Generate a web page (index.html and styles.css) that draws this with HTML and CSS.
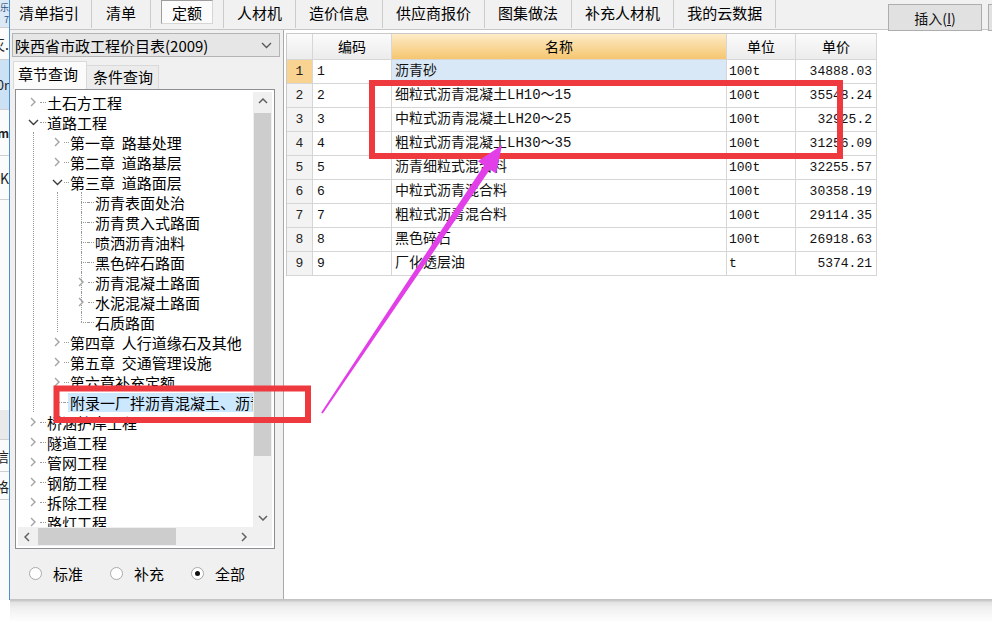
FILE: index.html
```html
<!DOCTYPE html>
<html lang="zh">
<head>
<meta charset="utf-8">
<title>定额</title>
<link rel="stylesheet" href="styles.css">
</head>
<body>
<div class="screen">
  <div class="strip">
    <div class="sb sb1"><span>乐</span><span>7</span></div>
    <div class="sb sb2"><span>灭.</span></div>
    <div class="sb sb3"><span>0r</span></div>
    <div class="sb sb4"><span>m</span></div>
    <div class="sb sb5"><span>K</span></div>
    <div class="sb sb6"></div>
    <div class="sb sb7"></div>
    <div class="sb sb8"><span>信</span></div>
    <div class="sb sb9"><span>格</span></div>
    <div class="sb sb10"></div>
  </div>
  <div class="window">
    <div class="tabbar">
      <div class="tab first">清单指引</div>
      <div class="tab wide">清单</div>
      <div class="tab sel"><span class="selbox">定额</span></div>
      <div class="tab">人材机</div>
      <div class="tab">造价信息</div>
      <div class="tab">供应商报价</div>
      <div class="tab">图集做法</div>
      <div class="tab">补充人材机</div>
      <div class="tab">我的云数据</div>
      <button class="btn">插入(<u>I</u>)</button>
      <button class="btn2"></button>
    </div>
    <div class="main">
      <div class="left">
        <div class="combo">
          <span>陕西省市政工程价目表(2009)</span>
          <svg class="combo-arrow" width="11" height="7" viewBox="0 0 11 7"><path d="M1 1l4.5 4.5L10 1" fill="none" stroke="#555" stroke-width="1.3"/></svg>
        </div>
        <div class="ltabs">
          <div class="ltab active">章节查询</div>
          <div class="ltab">条件查询</div>
        </div>
        <div class="tree">
          <div class="tree-body">
            <div class="node l0"><i class="tw"><svg width="8" height="10" viewBox="0 0 8 10"><path d="M2 1l4 4-4 4" fill="none" stroke="#a3a3a3" stroke-width="1.4"/></svg></i><i class="stub"></i><span>土石方工程</span></div>
            <div class="node l0"><i class="tw"><svg width="11" height="7" viewBox="0 0 11 7"><path d="M1 1l4.5 4.5L10 1" fill="none" stroke="#3c3c3c" stroke-width="1.4"/></svg></i><i class="stub"></i><span>道路工程</span></div>
            <div class="kids ka">
              <div class="node l1"><i class="tw"><svg width="8" height="10" viewBox="0 0 8 10"><path d="M2 1l4 4-4 4" fill="none" stroke="#a3a3a3" stroke-width="1.4"/></svg></i><i class="stub"></i><span>第一章&nbsp;&nbsp;路基处理</span></div>
              <div class="node l1"><i class="tw"><svg width="8" height="10" viewBox="0 0 8 10"><path d="M2 1l4 4-4 4" fill="none" stroke="#a3a3a3" stroke-width="1.4"/></svg></i><i class="stub"></i><span>第二章&nbsp;&nbsp;道路基层</span></div>
              <div class="node l1"><i class="tw"><svg width="11" height="7" viewBox="0 0 11 7"><path d="M1 1l4.5 4.5L10 1" fill="none" stroke="#3c3c3c" stroke-width="1.4"/></svg></i><i class="stub"></i><span>第三章&nbsp;&nbsp;道路面层</span></div>
              <div class="kids kb">
                <div class="node l2 leaf"><i class="tw"></i><i class="stub"></i><span>沥青表面处治</span></div>
                <div class="node l2 leaf"><i class="tw"></i><i class="stub"></i><span>沥青贯入式路面</span></div>
                <div class="node l2 leaf"><i class="tw"></i><i class="stub"></i><span>喷洒沥青油料</span></div>
                <div class="node l2 leaf"><i class="tw"></i><i class="stub"></i><span>黑色碎石路面</span></div>
                <div class="node l2 mid"><i class="tw"><svg width="8" height="10" viewBox="0 0 8 10"><path d="M2 1l4 4-4 4" fill="none" stroke="#a3a3a3" stroke-width="1.4"/></svg></i><i class="stub"></i><span>沥青混凝土路面</span></div>
                <div class="node l2 mid"><i class="tw"><svg width="8" height="10" viewBox="0 0 8 10"><path d="M2 1l4 4-4 4" fill="none" stroke="#a3a3a3" stroke-width="1.4"/></svg></i><i class="stub"></i><span>水泥混凝土路面</span></div>
                <div class="node l2 leaf last"><i class="tw"></i><i class="stub"></i><span>石质路面</span></div>
              </div>
              <div class="node l1"><i class="tw"><svg width="8" height="10" viewBox="0 0 8 10"><path d="M2 1l4 4-4 4" fill="none" stroke="#a3a3a3" stroke-width="1.4"/></svg></i><i class="stub"></i><span>第四章&nbsp;&nbsp;人行道缘石及其他</span></div>
              <div class="node l1"><i class="tw"><svg width="8" height="10" viewBox="0 0 8 10"><path d="M2 1l4 4-4 4" fill="none" stroke="#a3a3a3" stroke-width="1.4"/></svg></i><i class="stub"></i><span>第五章&nbsp;&nbsp;交通管理设施</span></div>
              <div class="node l1"><i class="tw"><svg width="8" height="10" viewBox="0 0 8 10"><path d="M2 1l4 4-4 4" fill="none" stroke="#a3a3a3" stroke-width="1.4"/></svg></i><i class="stub"></i><span>第六章补充定额</span></div>
              <div class="node l1 leaf1"><i class="tw"></i><i class="stub short"></i><span class="hl">附录一厂拌沥青混凝土、沥青混合料</span></div>
            </div>
            <div class="node l0"><i class="tw"><svg width="8" height="10" viewBox="0 0 8 10"><path d="M2 1l4 4-4 4" fill="none" stroke="#a3a3a3" stroke-width="1.4"/></svg></i><i class="stub"></i><span>桥涵护岸工程</span></div>
            <div class="node l0"><i class="tw"><svg width="8" height="10" viewBox="0 0 8 10"><path d="M2 1l4 4-4 4" fill="none" stroke="#a3a3a3" stroke-width="1.4"/></svg></i><i class="stub"></i><span>隧道工程</span></div>
            <div class="node l0"><i class="tw"><svg width="8" height="10" viewBox="0 0 8 10"><path d="M2 1l4 4-4 4" fill="none" stroke="#a3a3a3" stroke-width="1.4"/></svg></i><i class="stub"></i><span>管网工程</span></div>
            <div class="node l0"><i class="tw"><svg width="8" height="10" viewBox="0 0 8 10"><path d="M2 1l4 4-4 4" fill="none" stroke="#a3a3a3" stroke-width="1.4"/></svg></i><i class="stub"></i><span>钢筋工程</span></div>
            <div class="node l0"><i class="tw"><svg width="8" height="10" viewBox="0 0 8 10"><path d="M2 1l4 4-4 4" fill="none" stroke="#a3a3a3" stroke-width="1.4"/></svg></i><i class="stub"></i><span>拆除工程</span></div>
            <div class="node l0"><i class="tw"><svg width="8" height="10" viewBox="0 0 8 10"><path d="M2 1l4 4-4 4" fill="none" stroke="#a3a3a3" stroke-width="1.4"/></svg></i><i class="stub"></i><span>路灯工程</span></div>
          </div>
          <div class="vscroll">
            <div class="sarrow"><svg width="10" height="6" viewBox="0 0 10 6"><path d="M1 5l4-4 4 4" fill="none" stroke="#606060" stroke-width="1.5"/></svg></div>
            <div class="vtrack"><div class="vthumb"></div></div>
            <div class="sarrow"><svg width="10" height="6" viewBox="0 0 10 6"><path d="M1 1l4 4 4-4" fill="none" stroke="#606060" stroke-width="1.5"/></svg></div>
          </div>
          <div class="hscroll">
            <div class="harrow"><svg width="6" height="10" viewBox="0 0 6 10"><path d="M5 1L1 5l4 4" fill="none" stroke="#606060" stroke-width="1.5"/></svg></div>
            <div class="htrack"><div class="hthumb"></div></div>
            <div class="harrow"><svg width="6" height="10" viewBox="0 0 6 10"><path d="M1 1l4 4-4 4" fill="none" stroke="#606060" stroke-width="1.5"/></svg></div>
          </div>
          <div class="corner"></div>
        </div>
        <div class="radios">
          <label class="radio"><i class="circle"></i>标准</label>
          <label class="radio"><i class="circle"></i>补充</label>
          <label class="radio"><i class="circle on"></i>全部</label>
        </div>
      </div>
      <div class="right">
        <div class="grid">
          <div class="hd"></div>
          <div class="hd">编码</div>
          <div class="hd hd-sel">名称</div>
          <div class="hd">单位</div>
          <div class="hd">单价</div>

          <div class="rn rn-sel">1</div><div class="c code">1</div><div class="c name name-sel">沥青砂</div><div class="c unit">100t</div><div class="c price">34888.03</div>
          <div class="rn">2</div><div class="c code">2</div><div class="c name">细粒式沥青混凝土LH10～15</div><div class="c unit">100t</div><div class="c price">35548.24</div>
          <div class="rn">3</div><div class="c code">3</div><div class="c name">中粒式沥青混凝土LH20～25</div><div class="c unit">100t</div><div class="c price">32925.2</div>
          <div class="rn">4</div><div class="c code">4</div><div class="c name">粗粒式沥青混凝土LH30～35</div><div class="c unit">100t</div><div class="c price">31256.09</div>
          <div class="rn">5</div><div class="c code">5</div><div class="c name">沥青细粒式混合料</div><div class="c unit">100t</div><div class="c price">32255.57</div>
          <div class="rn">6</div><div class="c code">6</div><div class="c name">中粒式沥青混合料</div><div class="c unit">100t</div><div class="c price">30358.19</div>
          <div class="rn">7</div><div class="c code">7</div><div class="c name">粗粒式沥青混合料</div><div class="c unit">100t</div><div class="c price">29114.35</div>
          <div class="rn">8</div><div class="c code">8</div><div class="c name">黑色碎石</div><div class="c unit">100t</div><div class="c price">26918.63</div>
          <div class="rn">9</div><div class="c code">9</div><div class="c name">厂化透层油</div><div class="c unit">t</div><div class="c price">5374.21</div>
        </div>
      </div>
    </div>
  </div>
</div>
<div class="shadow"></div>

<svg class="overlay" width="992" height="621" viewBox="0 0 992 621">
  <rect x="372" y="83" width="468" height="73" fill="none" stroke="#ee3a3f" stroke-width="6"/>
  <rect x="56.5" y="388.5" width="251.5" height="31.5" fill="none" stroke="#ee3a3f" stroke-width="6"/>
  <polygon points="321.2,412.4 484.0,165.5 477.8,161.3 502,145 496.1,173.6 489.9,169.4 322.8,413.6" fill="#e23fe9"/>
</svg>
</body>
</html>
```

FILE: styles.css
```css
html, body {
  margin: 0;
  padding: 0;
}
body {
  width: 992px;
  height: 621px;
  overflow: hidden;
  position: relative;
  background: #ffffff;
  font-family: "Noto Sans CJK SC", "Noto Sans", sans-serif;
  color: #000;
}

.screen {
  display: flex;
  height: 600px;
}

/* strip of the window behind */
.strip {
  width: 10px;
  flex: none;
  box-sizing: border-box;
  border-right: 1px solid #4d8fd4;
  display: flex;
  flex-direction: column;
  background: #fbfbfb;
  overflow: hidden;
}
.sb {
  display: flex;
  justify-content: flex-end;
  align-items: center;
  overflow: hidden;
  white-space: nowrap;
  box-sizing: border-box;
  border-bottom: 1px solid #cfcfcf;
  font-size: 14px;
  color: #222;
}
.sb span { flex: none; }
.sb1 {
  height: 28px;
  background: #dbe8f5;
  font-size: 9px;
  line-height: 12px;
  color: #274f7f;
  flex-direction: column;
  align-items: flex-end;
  justify-content: center;
}
.sb2 { height: 32px; }
.sb3 { height: 50px; background: #cde1f5; font-size: 13px; }
.sb4 { height: 46px; font-size: 12px; font-weight: bold; }
.sb5 { height: 44px; }
.sb6 { height: 210px; border-bottom: none; }
.sb7 { height: 30px; background: #e9e9e9; }
.sb8 { height: 32px; }
.sb9 { height: 28px; }
.sb10 { flex: 1; border-bottom: none; }

.window {
  flex: 1;
  min-width: 0;
  display: flex;
  flex-direction: column;
}

/* top tabs */
.tabbar {
  height: 30px;
  flex: none;
  box-sizing: border-box;
  border-bottom: 1px solid #c6c6c6;
  background: #f1f1f1;
  display: flex;
  align-items: flex-start;
  overflow: visible;
  position: relative;
  z-index: 1;
}
.tab {
  padding: 0 13px;
  border-right: 1px solid #cbcbcb;
  height: 28px;
  line-height: 26px;
  font-size: 15px;
  white-space: nowrap;
  flex: none;
}
.tab.first { padding: 0 12px 0 9px; }
.tab.wide { padding: 0 14px; }
.tab.sel { padding: 0 10px; }
.selbox {
  display: block;
  height: 24px;
  box-sizing: border-box;
  line-height: 24px;
  padding: 0 10px;
  border: 1px solid #9d9d9d;
  border-right-color: #d6d6d6;
  border-bottom-color: #d6d6d6;
  background: #fbfbfb;
}
.btn {
  margin-left: auto;
  margin-top: 4px;
  width: 94px;
  height: 27px;
  flex: none;
  border: 1px solid #adadad;
  background: #e1e1e1;
  font-family: "Noto Sans CJK SC", sans-serif;
  font-size: 14px;
  color: #111;
  padding: 0;
}
.btn2 {
  margin-left: 6px;
  margin-top: 4px;
  width: 4px;
  height: 27px;
  flex: none;
  border: 1px solid #adadad;
  border-right: none;
  background: #e1e1e1;
  padding: 0;
}

.main {
  flex: 1;
  display: flex;
  min-height: 0;
  border-bottom: 1px solid #c4c4c4;
}

/* left panel */
.left {
  width: 274px;
  flex: none;
  box-sizing: border-box;
  border-right: 1px solid #a9a9a9;
  background: #f0f0f0;
  display: flex;
  flex-direction: column;
}
.combo {
  margin: 3px 3px 0 2px;
  height: 24px;
  box-sizing: border-box;
  border: 1px solid #b4b4b4;
  background: #e6e6e6;
  display: flex;
  align-items: center;
  justify-content: space-between;
  padding: 0 7px 0 2px;
  font-size: 15px;
  white-space: nowrap;
}
.combo-arrow { flex: none; }

.ltabs {
  display: flex;
  align-items: flex-end;
  margin: 4px 0 0 3px;
  height: 28px;
}
.ltab {
  font-size: 15px;
  white-space: nowrap;
  box-sizing: border-box;
  border: 1px solid #d9d9d9;
  border-bottom: none;
}
.ltab.active {
  height: 28px;
  line-height: 24px;
  padding: 0 8px 0 4px;
  background: #fbfbfb;
}
.ltab:not(.active) {
  height: 24px;
  line-height: 21px;
  padding: 0 5px 0 6px;
  border-left: none;
  background: #ececec;
}

/* tree */
.tree {
  margin-left: 5px;
  width: 260px;
  height: 460px;
  flex: none;
  box-sizing: border-box;
  border: 1px solid #8e8f92;
  padding: 2px;
  background: #fff;
  display: grid;
  grid-template-columns: 1fr 19px;
  grid-template-rows: 1fr 19px;
}
.tree-body {
  overflow: hidden;
  padding-top: 0;
  min-width: 0;
}
.node {
  display: flex;
  align-items: center;
  height: 20px;
  white-space: nowrap;
  font-size: 15px;
}
.l0 { padding-left: 8px; }
.l1 { padding-left: 16px; }
.l2 { padding-left: 16px; }
.tw {
  width: 14px;
  height: 20px;
  flex: none;
  display: flex;
  align-items: center;
  justify-content: center;
  position: relative;
}
.tw svg { position: relative; z-index: 1; }
.stub {
  width: 6px;
  height: 0;
  border-top: 1px dotted #9a9a9a;
  margin-right: 1px;
  flex: none;
}
.l1 .stub { width: 5px; }
.stub.short { width: 4px; margin-right: 0; }

.kids { border-left: 1px dotted #9a9a9a; }
.ka { margin-left: 15px; }
.kb { margin-left: 23px; }

.leaf .tw::before,
.mid .tw::before {
  content: "";
  position: absolute;
  left: 7px;
  top: 0;
  bottom: 0;
  border-left: 1px dotted #9a9a9a;
}
.leaf.last .tw::before { bottom: 10px; }
.leaf .tw::after,
.leaf1 .tw::after {
  content: "";
  position: absolute;
  left: 7px;
  right: 0;
  top: 10px;
  border-top: 1px dotted #9a9a9a;
}
.hl {
  flex: 1;
  background: #cce8ff;
  padding-left: 2px;
  height: 19px;
  line-height: 19px;
}

.vscroll {
  background: #f0f0f0;
  display: flex;
  flex-direction: column;
}
.sarrow {
  height: 18px;
  flex: none;
  display: flex;
  align-items: center;
  justify-content: center;
}
.vtrack { flex: 1; padding: 3px 1px 0; }
.vthumb { height: 343px; background: #cdcdcd; }

.hscroll {
  background: #f0f0f0;
  display: flex;
}
.harrow {
  width: 18px;
  flex: none;
  display: flex;
  align-items: center;
  justify-content: center;
}
.htrack { flex: 1; padding: 1px 0 1px 2px; }
.hthumb { width: 138px; height: 100%; background: #cdcdcd; }
.corner { background: #f0f0f0; }

/* radios */
.radios {
  flex: 1;
  display: flex;
  align-items: center;
  padding-left: 19px;
  padding-bottom: 1px;
  font-size: 15px;
}
.radio {
  display: flex;
  align-items: center;
  gap: 11px;
  margin-right: 27px;
  white-space: nowrap;
}
.circle {
  width: 13px;
  height: 13px;
  box-sizing: border-box;
  border: 1px solid #a9a9a9;
  border-radius: 50%;
  background: #fff;
  display: flex;
  align-items: center;
  justify-content: center;
}
.circle.on::after {
  content: "";
  width: 5px;
  height: 5px;
  border-radius: 50%;
  background: #111;
}

/* right grid */
.right {
  flex: 1;
  background: #fff;
  padding: 3px 0 0 2px;
  min-width: 0;
}
.grid {
  display: grid;
  grid-template-columns: 26px 79px 335px 69px 81px;
  grid-template-rows: 26px;
  grid-auto-rows: 24px;
  width: max-content;
  border-left: 1px solid #c9c9c9;
  border-top: 1px solid #c9c9c9;
}
.grid > div {
  box-sizing: border-box;
  border-right: 1px solid #d6d6d6;
  border-bottom: 1px solid #d6d6d6;
  white-space: nowrap;
  overflow: hidden;
}
.grid > .hd {
  height: 26px;
  line-height: 25px;
  text-align: center;
  font-size: 14px;
  background: linear-gradient(#fbfbfb, #ececec);
}
.grid > .hd-sel {
  background: linear-gradient(#fdebc7, #f6c670);
}
.rn {
  background: #f3f3f3;
  text-align: center;
  font-family: "Liberation Mono", monospace;
  font-size: 13px;
  line-height: 23px;
  color: #222;
}
.grid > .rn-sel { background: #f9d391; }
.c {
  line-height: 23px;
  font-family: "Liberation Mono", "Noto Sans CJK SC", monospace;
  font-size: 13px;
  color: #111;
}
.code { padding-left: 4px; }
.name { padding-left: 3px; font-size: 14px; }
.grid > .name-sel { background: #d9e8f6; }
.unit { padding-left: 2px; }
.price { text-align: right; padding-right: 4px; }

/* bottom shadow */
.shadow {
  margin-left: 10px;
  height: 21px;
  background: linear-gradient(#c9c9c9 0, #c9c9c9 1px, #e2e2e2 2px, #f0f0f0 8px, #fdfdfd 21px);
}

/* annotation layer */
.overlay {
  position: absolute;
  top: 0;
  left: 0;
  pointer-events: none;
  z-index: 5;
}
```
